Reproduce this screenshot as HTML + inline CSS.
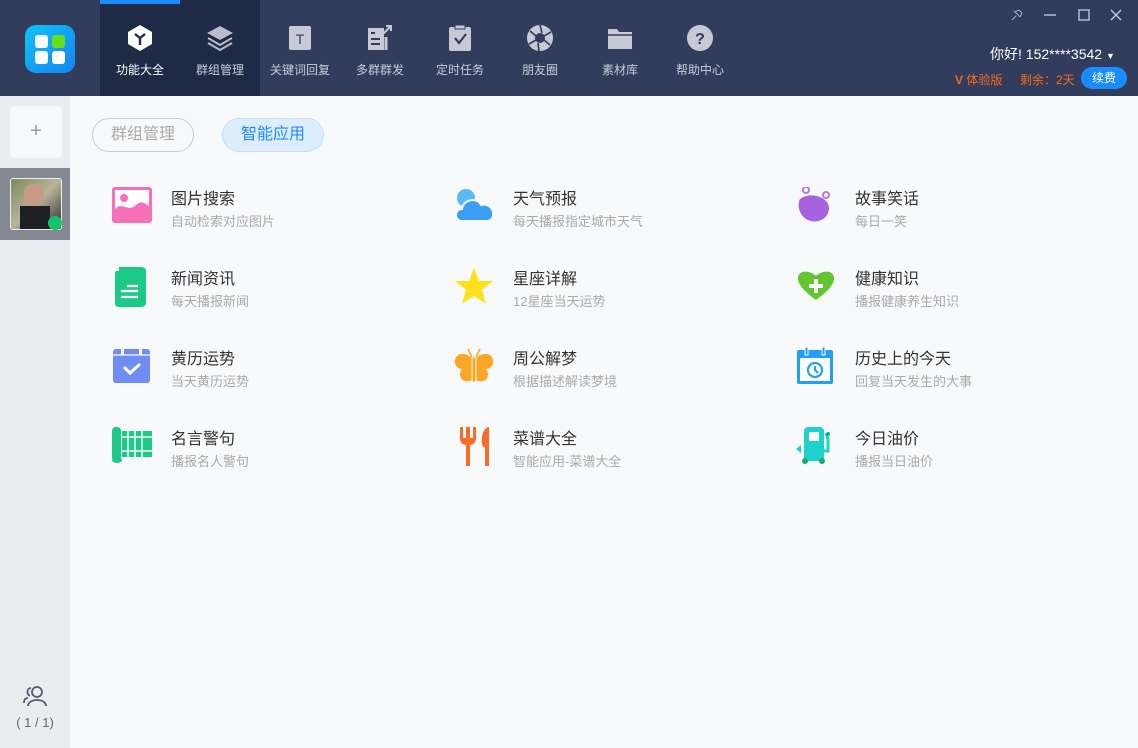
<!DOCTYPE html>
<html><head><meta charset="utf-8"><style>
*{margin:0;padding:0;box-sizing:border-box}
body{width:1138px;height:748px;overflow:hidden;background:#f8f9fb;font-family:"Liberation Sans","Noto Sans CJK SC",sans-serif;position:relative}
.hdr{position:absolute;left:0;top:0;width:1138px;height:96px;background:#323d5e}
.act{position:absolute;left:100px;top:0;width:160px;height:96px;background:#1f2a47}
.bar{position:absolute;left:100px;top:0;width:80px;height:4px;background:#1a8cff}
.nav{position:absolute;top:0;width:80px;height:96px;text-align:center;color:#c9cdd8;font-size:12px}
.nav svg{position:absolute;left:25px;top:23px}
.nav span{position:absolute;left:0;right:0;top:61px}
.side{position:absolute;left:0;top:96px;width:70px;height:652px;background:#e9edf2}
.item{position:absolute;height:50px}
.item svg{position:absolute;left:0;top:0}
.t{position:absolute;left:59px;top:-2px;font-size:16px;color:#333;white-space:nowrap}
.s{position:absolute;left:59px;top:24px;font-size:13px;color:#aaa;white-space:nowrap}
</style></head><body>
<div class="hdr"></div>
<div class="act"></div><div class="bar"></div>
<svg style="position:absolute;left:25px;top:25px" width="50" height="48" viewBox="0 0 50 48"><defs><linearGradient id="lg" x1="0" y1="0" x2="1" y2="1"><stop offset="0" stop-color="#11c2f7"/><stop offset="1" stop-color="#1583f5"/></linearGradient></defs><rect width="50" height="48" rx="11" fill="url(#lg)"/><rect x="10" y="10" width="13" height="13" rx="3" fill="#fff"/><rect x="27" y="10" width="13" height="13" rx="3" fill="#66e01a"/><rect x="10" y="26" width="13" height="13" rx="3" fill="#fff"/><rect x="27" y="26" width="13" height="13" rx="3" fill="#fff"/></svg>
<div class="nav" style="left:100px;color:#fff"><svg width="30" height="30" viewBox="0 0 30 30"><path d="M15 2 L27 9 V21 L15 28 L3 21 V9Z" fill="#fff"/><path d="M10 11 L15 15 L20 11 M15 15 V22" stroke="#1f2a47" stroke-width="2.4" fill="none"/></svg><span>功能大全</span></div>
<div class="nav" style="left:180px"><svg width="30" height="30" viewBox="0 0 30 30"><path d="M15 3 L28 10 L15 17 L2 10Z" fill="#b9bdc9"/><path d="M3 15 L15 22 L27 15 M3 20 L15 27 L27 20" stroke="#b9bdc9" stroke-width="2" fill="none"/></svg><span>群组管理</span></div>
<div class="nav" style="left:260px"><svg width="30" height="30" viewBox="0 0 30 30"><rect x="4" y="3" width="22" height="24" rx="2" fill="#c7cad4"/><text x="15" y="21" font-size="14" text-anchor="middle" fill="#323d5e" font-family="Liberation Sans">T</text></svg><span>关键词回复</span></div>
<div class="nav" style="left:340px"><svg width="30" height="30" viewBox="0 0 30 30"><path d="M3 5 H19 V27 H3Z" fill="#c7cad4"/><path d="M6 10 H10 M6 16 H15 M6 21 H15" stroke="#323d5e" stroke-width="2"/><path d="M17 12 L26 3 M21 3 H26 V8" stroke="#c7cad4" stroke-width="2" fill="none"/><path d="M21 14 V27" stroke="#c7cad4" stroke-width="3"/></svg><span>多群群发</span></div>
<div class="nav" style="left:420px"><svg width="30" height="30" viewBox="0 0 30 30"><rect x="4" y="4" width="22" height="24" rx="2" fill="#c7cad4"/><rect x="10" y="2" width="10" height="4" fill="#c7cad4" stroke="#323d5e"/><path d="M10 15 L14 20 L21 11" stroke="#323d5e" stroke-width="2.2" fill="none"/></svg><span>定时任务</span></div>
<div class="nav" style="left:500px"><svg width="30" height="30" viewBox="0 0 30 30"><circle cx="15" cy="15" r="13" fill="#c7cad4"/><circle cx="15" cy="15" r="5" fill="#323d5e"/><path d="M15 2 L17 10 M26 9 L19 13 M25 22 L19 17 M14 28 L13 20 M4 21 L11 17 M5 8 L11 13" stroke="#323d5e" stroke-width="1.6"/></svg><span>朋友圈</span></div>
<div class="nav" style="left:580px"><svg width="30" height="30" viewBox="0 0 30 30"><path d="M3 6 H12 L14 9 H27 V26 H3Z" fill="#c7cad4"/><path d="M3 12 H27" stroke="#323d5e" stroke-width="1.5"/></svg><span>素材库</span></div>
<div class="nav" style="left:660px"><svg width="30" height="30" viewBox="0 0 30 30"><circle cx="15" cy="15" r="13" fill="#c7cad4"/><text x="15" y="21" font-size="16" font-weight="bold" text-anchor="middle" fill="#323d5e" font-family="Liberation Sans">?</text></svg><span>帮助中心</span></div>
<svg style="position:absolute;left:1008px;top:7px" width="120" height="16" viewBox="0 0 120 16"><path d="M4 13 L8 9 M6 4 L12 10 M7 5 L11 3 L14 6 L12 10" stroke="#aab" fill="none"/><path d="M36 8 H48" stroke="#ccd" stroke-width="1.3"/><rect x="71" y="3" width="10" height="10" stroke="#ccd" fill="none" stroke-width="1.3"/><path d="M103 3 L113 13 M113 3 L103 13" stroke="#ccd" stroke-width="1.3"/></svg>
<div style="position:absolute;left:990px;top:44px;color:#fff;font-size:14px">你好! 152****3542 <span style="font-size:9px">▼</span></div>
<div style="position:absolute;left:955px;top:71px;color:#f36b1c;font-size:12px"><b>V</b> 体验版</div>
<div style="position:absolute;left:1020px;top:71px;color:#f36b1c;font-size:12px">剩余：2天</div>
<div style="position:absolute;left:1081px;top:67px;width:46px;height:22px;border-radius:11px;background:#1a8cff;color:#fff;font-size:12px;text-align:center;line-height:22px">续费</div>
<div class="side"></div>
<div style="position:absolute;left:10px;top:106px;width:52px;height:52px;background:#f8f9fb;border-radius:3px;color:#999;font-size:20px;text-align:center;line-height:50px">+</div>
<div style="position:absolute;left:0;top:168px;width:70px;height:72px;background:#848891"></div>
<div style="position:absolute;left:10px;top:178px;width:52px;height:52px;background:linear-gradient(135deg,#7a8a5a,#b9b39a 50%,#2a2a2a);border-radius:3px;border:1px solid #eee"></div>
<div style="position:absolute;left:24px;top:184px;width:20px;height:22px;background:#c89a88;border-radius:9px"></div>
<div style="position:absolute;left:20px;top:206px;width:30px;height:23px;background:#1d2025"></div>
<div style="position:absolute;left:48px;top:216px;width:14px;height:14px;border-radius:50%;background:#12c467"></div>
<svg style="position:absolute;left:22px;top:684px" width="26" height="24" viewBox="0 0 26 24"><circle cx="15" cy="8" r="5" stroke="#555b6a" stroke-width="1.8" fill="none"/><path d="M6 22 C6 14 24 14 24 22" stroke="#555b6a" stroke-width="1.8" fill="none"/><path d="M9 4 C5 4 4 10 8 12 M2 19 C2 15 4 14 6 14" stroke="#555b6a" stroke-width="1.8" fill="none"/></svg>
<div style="position:absolute;left:0;width:70px;top:715px;text-align:center;font-size:13px;color:#666">( 1 / 1)</div>
<div style="position:absolute;left:92px;top:118px;width:102px;height:34px;border:1px solid #ccc;border-radius:17px;color:#aaa;font-size:16px;text-align:center;line-height:32px">群组管理</div>
<div style="position:absolute;left:222px;top:118px;width:102px;height:34px;border:1px solid #c5e0fb;background:#deedfc;border-radius:17px;color:#1a8cff;font-size:16px;text-align:center;line-height:32px">智能应用</div>

<div class="item" style="left:112px;top:187px"><svg width="40" height="36" viewBox="0 0 40 36"><rect x="0" y="0" width="40" height="36" rx="3" fill="#f76fb8"/><rect x="3" y="3" width="34" height="24" fill="#fff"/><circle cx="12" cy="11" r="4" fill="#f76fb8"/><path d="M3 27 L3 22 C10 14 16 26 24 18 C29 13 33 16 37 19 V27Z" fill="#f76fb8"/></svg><div class="t">图片搜索</div><div class="s">自动检索对应图片</div></div>
<div class="item" style="left:454px;top:187px"><svg width="40" height="36" viewBox="0 0 40 36"><circle cx="12" cy="11" r="9" fill="#5bb8f7"/><path d="M8 34 C0 34 0 22 8 22 C9 12 24 10 27 18 C34 16 40 22 39 28 C39 32 36 34 33 34Z" fill="#3a9ff5" stroke="#f8f9fb" stroke-width="2"/></svg><div class="t">天气预报</div><div class="s">每天播报指定城市天气</div></div>
<div class="item" style="left:796px;top:187px"><svg width="40" height="40" viewBox="0 0 40 40"><circle cx="12" cy="-2" r="0"/><path d="M4 12 C14 4 34 10 33 22 C32 32 22 36 15 34 C5 32 0 20 4 12Z" fill="#a663df"/><circle cx="10" cy="2" r="3" stroke="#b27ae4" stroke-width="2" fill="none" transform="translate(0,1)"/><circle cx="30" cy="8" r="3" stroke="#b27ae4" stroke-width="2" fill="none"/></svg><div class="t">故事笑话</div><div class="s">每日一笑</div></div>

<div class="item" style="left:112px;top:267px"><svg width="40" height="40" viewBox="0 0 40 40"><path d="M7 0 H30 C32 0 34 2 34 4 V36 C34 38 32 40 30 40 H6 C4 40 3 38 3 36 V5Z" fill="#1ec887"/><path d="M3 4 L7 0 V4Z" fill="#f8f9fb"/><path d="M15 19 H26 M9 24 H26 M9 30 H26" stroke="#fff" stroke-width="2.2"/></svg><div class="t">新闻资讯</div><div class="s">每天播报新闻</div></div>
<div class="item" style="left:454px;top:267px"><svg width="40" height="40" viewBox="0 0 40 40"><path d="M20 1 L25 14 L39 14 L28 23 L32 37 L20 29 L8 37 L12 23 L1 14 L15 14Z" fill="#fbe21d"/></svg><div class="t">星座详解</div><div class="s">12星座当天运势</div></div>
<div class="item" style="left:796px;top:267px"><svg width="40" height="40" viewBox="0 0 40 40"><path d="M20 33 C8 24 2 18 2 11 C2 4 12 2 20 9 C28 2 38 4 38 11 C38 18 32 24 20 33Z" fill="#62c62e"/><path d="M20 12 V26 M13 19 H27" stroke="#fff" stroke-width="4"/></svg><div class="t">健康知识</div><div class="s">播报健康养生知识</div></div>

<div class="item" style="left:112px;top:347px"><svg width="40" height="40" viewBox="0 0 40 40"><rect x="1" y="2" width="37" height="34" rx="3" fill="#6f8df5"/><path d="M1 8 H38" stroke="#fff" stroke-width="1.2"/><rect x="9" y="0" width="3" height="8" rx="1.5" fill="#fff"/><rect x="27" y="0" width="3" height="8" rx="1.5" fill="#fff"/><path d="M12 20 L18 26 L28 17" stroke="#fff" stroke-width="3" fill="none"/></svg><div class="t">黄历运势</div><div class="s">当天黄历运势</div></div>
<div class="item" style="left:454px;top:347px"><svg width="40" height="40" viewBox="0 0 40 40"><path d="M18 11 C10 4 0 6 1 16 C2 22 8 22 8 22 C3 28 8 38 18 33Z M22 11 C30 4 40 6 39 16 C38 22 32 22 32 22 C37 28 32 38 22 33Z" fill="#fba725"/><rect x="18" y="10" width="4" height="25" fill="#fba725" stroke="#fff" stroke-width="1"/><path d="M18 10 L14 2 M22 10 L26 2" stroke="#fba725" stroke-width="1.5"/></svg><div class="t">周公解梦</div><div class="s">根据描述解读梦境</div></div>
<div class="item" style="left:796px;top:347px"><svg width="40" height="40" viewBox="0 0 40 40"><rect x="1" y="3" width="36" height="34" rx="2" fill="#219ef6"/><rect x="4" y="11" width="30" height="23" fill="#fff"/><rect x="9" y="0" width="3" height="8" fill="#219ef6" stroke="#fff"/><rect x="26" y="0" width="3" height="8" fill="#219ef6" stroke="#fff"/><circle cx="19" cy="23" r="7" stroke="#219ef6" stroke-width="2.2" fill="none"/><path d="M19 19 V23 L22 26" stroke="#219ef6" stroke-width="2" fill="none"/></svg><div class="t">历史上的今天</div><div class="s">回复当天发生的大事</div></div>

<div class="item" style="left:112px;top:427px"><svg width="40" height="40" viewBox="0 0 40 40"><rect x="0" y="0" width="9" height="34" rx="4" fill="#1ec887"/><ellipse cx="5" cy="33" rx="5" ry="3" fill="#1ec887"/><path d="M10 4 H40 V30 H10Z" fill="#1ec887"/><path d="M16 4 V30 M23 4 V30 M30 4 V30 M10 10 H40 M10 24 H40" stroke="#f8f9fb" stroke-width="1.6"/></svg><div class="t">名言警句</div><div class="s">播报名人警句</div></div>
<div class="item" style="left:454px;top:427px"><svg width="40" height="40" viewBox="0 0 40 40"><path d="M6 0 V12 C6 16 10 18 12 18 V39 H16 V18 C18 18 22 16 22 12 V0 H19 V11 H16 V0 H12 V11 H9 V0Z" fill="#fb6b26"/><path d="M34 0 C27 4 27 14 29 20 H31 V39 H35 V0Z" fill="#fb6b26"/></svg><div class="t">菜谱大全</div><div class="s">智能应用-菜谱大全</div></div>
<div class="item" style="left:796px;top:427px"><svg width="40" height="40" viewBox="0 0 40 40"><path d="M8 4 C8 2 10 0 12 0 H24 C26 0 28 2 28 4 V34 H8Z" fill="#1ed1cd"/><rect x="13" y="5" width="10" height="9" fill="#fff"/><path d="M28 24 H32 V12 L30 6" stroke="#1ed1cd" stroke-width="3" fill="none"/><path d="M0 22 L5 18 V26Z" fill="#1ed1cd"/><circle cx="9" cy="34" r="3" fill="#17b06a"/><circle cx="26" cy="34" r="3" fill="#17b06a"/><circle cx="32" cy="7" r="2" fill="#17b06a"/></svg><div class="t">今日油价</div><div class="s">播报当日油价</div></div>
</body></html>
